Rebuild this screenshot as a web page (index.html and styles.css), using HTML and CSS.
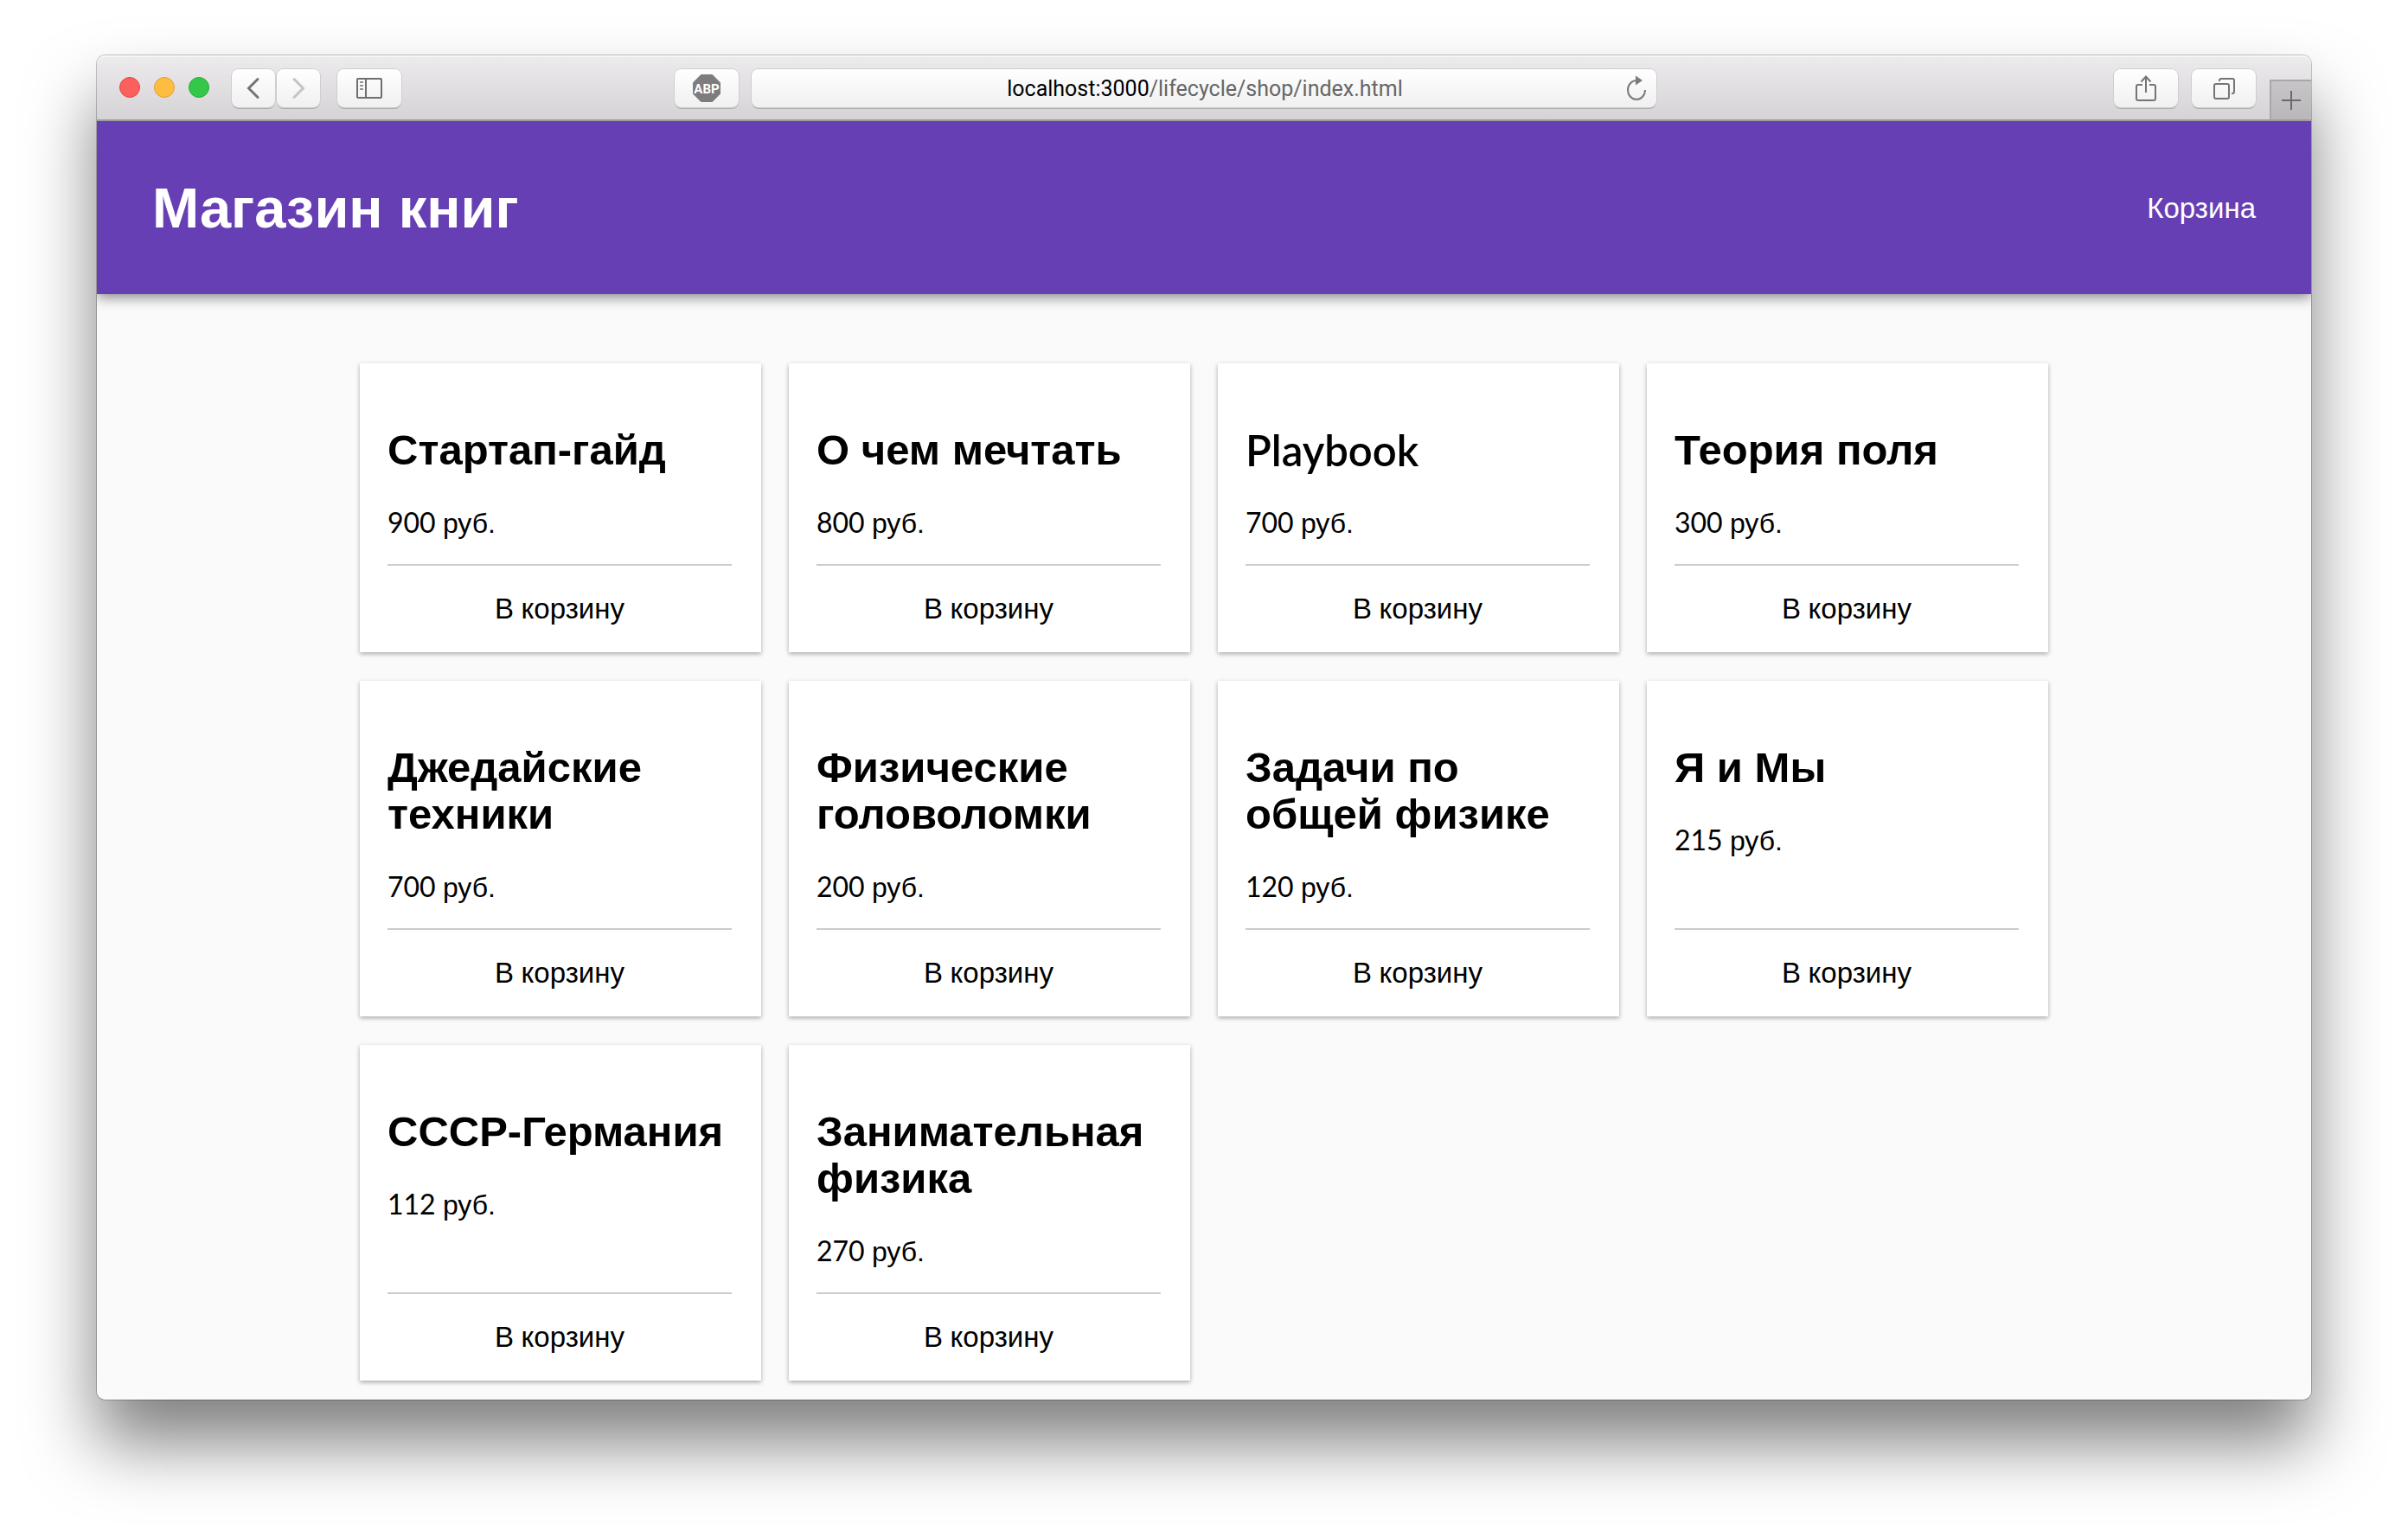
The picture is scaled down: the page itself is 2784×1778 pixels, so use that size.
FILE: index.html
```html
<!DOCTYPE html>
<html lang="ru">
<head>
<meta charset="utf-8">
<title>Магазин книг</title>
<link rel="stylesheet" href="styles.css">
</head>
<body>
<div class="window">
  <div class="toolbar">
    <div class="toolbar-left">
      <div class="lights">
        <button class="light light-close" aria-label="Закрыть"></button>
        <button class="light light-min" aria-label="Свернуть"></button>
        <button class="light light-max" aria-label="Развернуть"></button>
      </div>
      <div class="history">
        <button class="tool tool-narrow" aria-label="Назад"><svg width="16" height="26" viewBox="0 0 16 26"><path d="M13 2.500 2.500 13 13 23.500" fill="none" stroke="#747474" stroke-width="3" stroke-linecap="round"/></svg></button>
        <button class="tool tool-narrow" aria-label="Вперёд"><svg width="16" height="26" viewBox="0 0 16 26"><path d="M3 2.500 13.500 13 3 23.500" fill="none" stroke="#c4c4c4" stroke-width="3" stroke-linecap="round"/></svg></button>
      </div>
      <button class="tool" aria-label="Боковая панель"><svg width="30" height="24" viewBox="0 0 30 24"><rect x="1" y="1" width="28" height="22" rx="1" fill="none" stroke="#6e6e6e" stroke-width="2"/><path d="M11 1v22" stroke="#6e6e6e" stroke-width="2"/><path d="M4 5h4M4 9h4M4 13h4" stroke="#949494" stroke-width="2"/></svg></button>
      <button class="tool tool-adblock" aria-label="Adblock Plus"><svg width="32" height="32" viewBox="0 0 32 32"><path d="M9.500 0h13L32 9.500v13L22.500 32h-13L0 22.500v-13z" fill="#7d7d7d"/><text x="16" y="22" text-anchor="middle" class="abp">ABP</text></svg></button>
    </div>
    <div class="address">
      <div class="url" role="textbox" aria-label="Адрес"><span class="host">localhost:3000</span>/lifecycle/shop/index.html</div>
      <button class="reload" aria-label="Обновить"><svg width="26" height="30" viewBox="0 0 26 30"><path d="M13 6A10 11 0 1 0 23 17" fill="none" stroke="#7b7b7b" stroke-width="2"/><path d="M12 0.500 20 6 12 11.500z" fill="#7b7b7b"/></svg></button>
    </div>
    <div class="toolbar-right">
      <button class="tool" aria-label="Поделиться"><svg width="24" height="32" viewBox="0 0 24 32"><path d="M8 12H3q-2 0-2 2v14q0 2 2 2h18q2 0 2-2V14q0-2-2-2h-5M12 21V3M6.500 8.500 12 2.500l5.500 6" fill="none" stroke="#747474" stroke-width="2"/></svg></button>
      <button class="tool" aria-label="Все вкладки"><svg width="26" height="26" viewBox="0 0 26 26"><rect x="2" y="8" width="17" height="17" rx="2" fill="none" stroke="#747474" stroke-width="2"/><path d="M8 5V4q0-2 2-2h13q2 0 2 2v13q0 2-2 2h-1" fill="none" stroke="#747474" stroke-width="2"/></svg></button>
      <button class="new-tab" aria-label="Новая вкладка"><svg width="22" height="22" viewBox="0 0 22 22"><path d="M11 0v22M0 11h22" stroke="#6b6a6c" stroke-width="2"/></svg></button>
    </div>
  </div>
  <div class="page">
    <header class="header">
      <h1 class="site-title">Магазин книг</h1>
      <a class="cart-link" href="#cart">Корзина</a>
    </header>
    <main class="catalog">
      <article class="card"><h2 class="card-title">Стартап-гайд</h2><p class="price"><span class="latin">900 </span>руб.</p><button class="buy">В<span class="latin"> </span>корзину</button></article>
      <article class="card"><h2 class="card-title">О чем мечтать</h2><p class="price"><span class="latin">800 </span>руб.</p><button class="buy">В<span class="latin"> </span>корзину</button></article>
      <article class="card"><h2 class="card-title card-title-latin">Playbook</h2><p class="price"><span class="latin">700 </span>руб.</p><button class="buy">В<span class="latin"> </span>корзину</button></article>
      <article class="card"><h2 class="card-title">Теория поля</h2><p class="price"><span class="latin">300 </span>руб.</p><button class="buy">В<span class="latin"> </span>корзину</button></article>
      <article class="card"><h2 class="card-title">Джедайские техники</h2><p class="price"><span class="latin">700 </span>руб.</p><button class="buy">В<span class="latin"> </span>корзину</button></article>
      <article class="card"><h2 class="card-title">Физические головоломки</h2><p class="price"><span class="latin">200 </span>руб.</p><button class="buy">В<span class="latin"> </span>корзину</button></article>
      <article class="card"><h2 class="card-title">Задачи по общей физике</h2><p class="price"><span class="latin">120 </span>руб.</p><button class="buy">В<span class="latin"> </span>корзину</button></article>
      <article class="card"><h2 class="card-title">Я и Мы</h2><p class="price"><span class="latin">215 </span>руб.</p><button class="buy">В<span class="latin"> </span>корзину</button></article>
      <article class="card"><h2 class="card-title">СССР-Германия</h2><p class="price"><span class="latin">112 </span>руб.</p><button class="buy">В<span class="latin"> </span>корзину</button></article>
      <article class="card"><h2 class="card-title">Занимательная физика</h2><p class="price"><span class="latin">270 </span>руб.</p><button class="buy">В<span class="latin"> </span>корзину</button></article>
    </main>
  </div>
</div>
</body>
</html>
```
FILE: styles.css
```css
* {
  box-sizing: border-box;
}

body {
  display: flex;
  flex-direction: column;
  min-height: 100vh;
  margin: 0;
  padding: 64px 112px 160px;
  background: #fff;
  color: #000;
  font: 32px/38px "Liberation Sans", Arial, sans-serif;
}

button {
  padding: 0;
  border: 0;
  background: none;
  color: inherit;
  font: inherit;
}

svg {
  display: block;
}

.window {
  display: flex;
  flex: 1;
  flex-direction: column;
  border-radius: 10px;
  box-shadow: 0 0 0 1px rgba(0, 0, 0, 0.22), 0 50px 80px rgba(0, 0, 0, 0.5);
}

/* Browser toolbar */

.toolbar {
  display: grid;
  grid-template-columns: 1fr minmax(0, 1046px) 1fr;
  gap: 15px;
  align-items: center;
  height: 76px;
  border-bottom: 2px solid #9f9da0;
  border-radius: 10px 10px 0 0;
  background: linear-gradient(#edebee, #d5d3d6);
  box-shadow: inset 0 2px #f6f5f6;
}

.toolbar-left,
.toolbar-right {
  display: flex;
  align-items: center;
  height: 74px;
}

.toolbar-left {
  padding-left: 26px;
}

.lights {
  display: flex;
  gap: 16px;
}

.light {
  width: 24px;
  height: 24px;
  border: 1px solid;
  border-radius: 50%;
}

.light-close {
  border-color: #df4744;
  background: #fc605c;
}

.light-min {
  border-color: #de9f34;
  background: #fdbd41;
}

.light-max {
  border-color: #27aa35;
  background: #34c84a;
}

.history {
  display: flex;
  gap: 2px;
  margin: 0 20px 0 26px;
}

.tool,
.address {
  display: flex;
  align-items: center;
  justify-content: center;
  height: 44px;
  margin-top: 2px;
  border-radius: 8px;
  background: linear-gradient(#fff, #f0f0f0);
  box-shadow: 0 0 0 1px #cfcdd0, 0 2px #aeacaf;
}

.tool {
  width: 74px;
}

.tool-narrow {
  width: 50px;
}

.tool-adblock {
  margin-left: auto;
}

.abp {
  fill: #fff;
  font: bold 15px Roboto, sans-serif;
}

.address {
  padding: 0 10px 0 38px;
}

.url {
  flex: 1;
  padding-top: 2px;
  color: #666;
  font: 25px/32px Roboto, sans-serif;
  text-align: center;
}

.host {
  color: #000;
}

.toolbar-right {
  justify-content: flex-end;
  gap: 16px;
}

.new-tab {
  display: flex;
  align-self: flex-end;
  align-items: center;
  justify-content: center;
  width: 48px;
  height: 46px;
  border-top: 2px solid #a9a7aa;
  border-left: 2px solid #a9a7aa;
  background: linear-gradient(#c7c5c8, #bab7bb);
}

/* Shop page */

.page {
  flex: 1;
  border-radius: 0 0 10px 10px;
  background: #fafafa;
  overflow: hidden;
}

.header {
  display: flex;
  align-items: center;
  justify-content: space-between;
  height: 200px;
  padding: 2px 64px 0;
  background: #673fb4;
  box-shadow: 0 4px 14px rgba(0, 0, 0, 0.45);
  color: #fff;
}

.site-title {
  margin: 0;
  font-size: 65px;
  line-height: 74px;
}

.cart-link {
  color: inherit;
  font-size: 33px;
  text-decoration: none;
}

.catalog {
  display: grid;
  grid-template-columns: repeat(4, 1fr);
  gap: 33px 32px;
  max-width: 1952px;
  margin: 0 auto;
  padding: 80px 0 20px;
}

.card {
  display: flex;
  flex-direction: column;
  padding: 73px 34px 0 32px;
  background: #fff;
  box-shadow: 0 2px 5px rgba(0, 0, 0, 0.33);
}

.card-title {
  margin: 0 0 39px;
  font-size: 49px;
  line-height: 54px;
}

.card-title-latin {
  font-family: Lato, sans-serif;
  font-weight: 600;
}

.latin {
  font-family: Lato, sans-serif;
  line-height: 32px;
  white-space: pre;
}

.price {
  margin: 0 0 28px;
}

.buy {
  height: 102px;
  margin-top: auto;
  border-top: 2px solid #ccc;
  font-size: 33px;
}
```
